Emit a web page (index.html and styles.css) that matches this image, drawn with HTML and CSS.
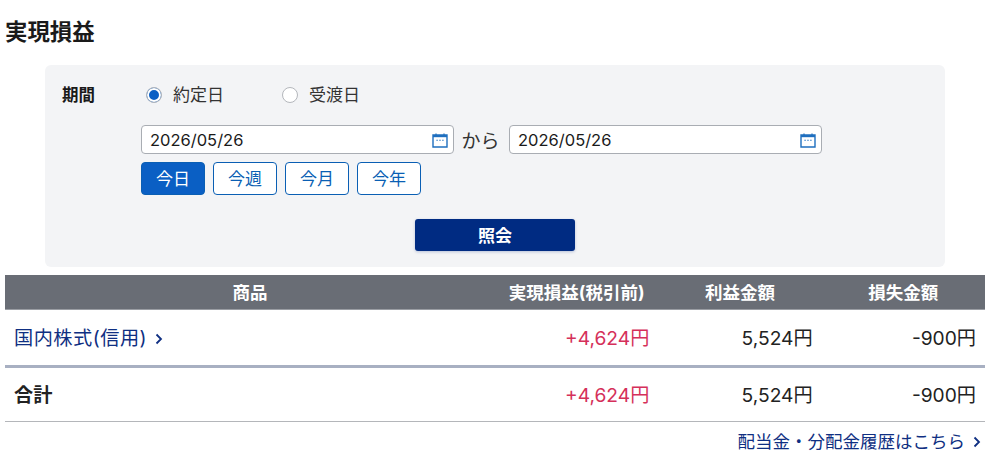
FILE: index.html
```html
<!DOCTYPE html>
<html lang="ja">
<head>
  <meta charset="UTF-8">
  <meta name="viewport" content="width=device-width, initial-scale=1">
  <title>実現損益</title>
  <link rel="stylesheet" href="styles.css">
</head>
<body>
  <h1 class="page-title">実現損益</h1>

  <form class="search-panel" onsubmit="return false">
    <div class="period">
      <div class="period-label">期間</div>
      <div class="period-fields">
        <div class="radios">
          <label class="radio"><span class="radio-mark checked"></span>約定日</label>
          <label class="radio"><span class="radio-mark"></span>受渡日</label>
        </div>
        <div class="dates">
          <div class="date-input">
            <span>2026/05/26</span>
            <svg class="cal" viewBox="0 0 16 16" width="16" height="16"><path d="M1 3h14v12H1z" fill="none" stroke="#1f6fbf" stroke-width="1.4"/><path d="M1 3h14v2.2H1z" fill="#1f6fbf"/><path d="M4 1.6v2M12 1.6v2" stroke="#1f6fbf" stroke-width="1.2"/><path d="M4.4 8.2h1.4M7.3 8.2h1.4M10.2 8.2h1.4" stroke="#1f6fbf" stroke-width="1.1"/></svg>
          </div>
          <span class="from">から</span>
          <div class="date-input">
            <span>2026/05/26</span>
            <svg class="cal" viewBox="0 0 16 16" width="16" height="16"><path d="M1 3h14v12H1z" fill="none" stroke="#1f6fbf" stroke-width="1.4"/><path d="M1 3h14v2.2H1z" fill="#1f6fbf"/><path d="M4 1.6v2M12 1.6v2" stroke="#1f6fbf" stroke-width="1.2"/><path d="M4.4 8.2h1.4M7.3 8.2h1.4M10.2 8.2h1.4" stroke="#1f6fbf" stroke-width="1.1"/></svg>
          </div>
        </div>
        <div class="quick">
          <button class="quick-btn active">今日</button>
          <button class="quick-btn">今週</button>
          <button class="quick-btn">今月</button>
          <button class="quick-btn">今年</button>
        </div>
      </div>
    </div>
    <div class="submit-row">
      <button class="submit-btn">照会</button>
    </div>
  </form>

  <table class="result">
    <thead>
      <tr>
        <th class="col-name">商品</th>
        <th>実現損益(税引前)</th>
        <th>利益金額</th>
        <th>損失金額</th>
      </tr>
    </thead>
    <tbody>
      <tr class="row-item">
        <td class="name"><a href="#" class="item-link">国内株式(信用)<svg class="chev" viewBox="0 0 8 12" width="8" height="12"><path d="M1.500 1.500 6 6l-4.500 4.500" fill="none" stroke="currentColor" stroke-width="1.800"/></svg></a></td>
        <td class="plus">+4,624円</td>
        <td>5,524円</td>
        <td>-900円</td>
      </tr>
      <tr class="row-total">
        <td class="name total">合計</td>
        <td class="plus">+4,624円</td>
        <td>5,524円</td>
        <td>-900円</td>
      </tr>
    </tbody>
  </table>

  <div class="history">
    <a href="#">配当金・分配金履歴はこちら<svg class="chev" viewBox="0 0 8 12" width="8" height="12"><path d="M1.500 1.500 6 6l-4.500 4.500" fill="none" stroke="currentColor" stroke-width="1.800"/></svg></a>
  </div>
</body>
</html>
```

FILE: styles.css
```css
body {
  margin: 0;
  padding: 0 6px 0 5px;
  font-family: Inter, "Noto Sans CJK JP", sans-serif;
  font-size: 16px;
  color: #1a1a1a;
  background: #fff;
}

.page-title {
  margin: 0 0 20px;
  padding-top: 18px;
  font-size: 22.4px;
  line-height: 27px;
  font-weight: 700;
}

.search-panel {
  margin: 0 40px;
  height: 202px;
  box-sizing: border-box;
  padding: 19px 0 0 17px;
  background: #f3f4f6;
  border-radius: 6px;
}

.period {
  display: flex;
}

.period-label {
  width: 79px;
  font-size: 16.500px;
  font-weight: 700;
  line-height: 22px;
}

.radios {
  display: flex;
  gap: 58px;
  height: 22px;
  padding-left: 5px;
}

.radio {
  display: flex;
  align-items: center;
  gap: 11px;
  font-size: 17px;
  line-height: 22px;
  color: #333;
}

.radio-mark {
  width: 16px;
  height: 16px;
  box-sizing: border-box;
  border: 1px solid #b4b7bc;
  border-radius: 50%;
  background: #fff;
}

.radio-mark.checked {
  background: #0a5fc4;
  box-shadow: inset 0 0 0 2px #fff;
}

.dates {
  display: flex;
  align-items: center;
  margin-top: 19px;
  gap: 8px;
}

.date-input {
  width: 312.500px;
  height: 29px;
  box-sizing: border-box;
  display: flex;
  justify-content: space-between;
  align-items: center;
  padding: 0 5px 0 8px;
  background: #fff;
  border: 1px solid #a9adb3;
  border-radius: 4px;
  font-size: 16.500px;
}

.from {
  margin-right: 1.500px;
  font-size: 19px;
  color: #333;
}

.quick {
  display: flex;
  gap: 8px;
  margin-top: 8px;
}

.quick-btn {
  width: 64px;
  height: 33px;
  padding: 0 0 2px;
  border: 1px solid #0a5fb4;
  border-radius: 4px;
  background: #fff;
  color: #0a5fb4;
  font: inherit;
  font-size: 17px;
}

.quick-btn.active {
  background: #0a5fc4;
  color: #fff;
}

.submit-row {
  display: flex;
  justify-content: center;
  margin-top: 24px;
  padding-right: 17px;
}

.submit-btn {
  width: 160px;
  height: 32px;
  padding: 0 0 2px;
  border: 0;
  border-radius: 3px;
  background: #002b82;
  color: #fff;
  font: inherit;
  font-size: 17px;
  font-weight: 700;
  box-shadow: 0 1px 3px rgba(0, 43, 130, 0.25);
}

.result {
  width: 980px;
  margin-top: 8px;
  border-collapse: collapse;
  table-layout: fixed;
}

.result th {
  height: 32px;
  padding: 0 0 2px;
  background: #696d75;
  color: #fff;
  font-size: 17.500px;
  font-weight: 700;
  border-bottom: 1px solid #9a9da3;
}

.col-name {
  width: 490px;
}

.result td {
  padding: 0 9px 2px 0;
  text-align: right;
  font-size: 19.200px;
  color: #222;
}

.row-item td {
  height: 53px;
  border-bottom: 3px solid #a8b0c2;
}

.row-total td {
  height: 51px;
  border-bottom: 1px solid #b4b6ba;
}

.result td.name {
  text-align: left;
  padding-left: 9px;
}

.result td.total {
  font-weight: 700;
}

.result td.plus {
  color: #d5305a;
}

a {
  color: #0f2f82;
  text-decoration: none;
}

.item-link {
  letter-spacing: 0.500px;
}

.chev {
  margin-left: 8px;
}

.history {
  text-align: right;
  padding: 8px 4px 0 0;
  font-size: 17.500px;
  line-height: 24px;
}
```
